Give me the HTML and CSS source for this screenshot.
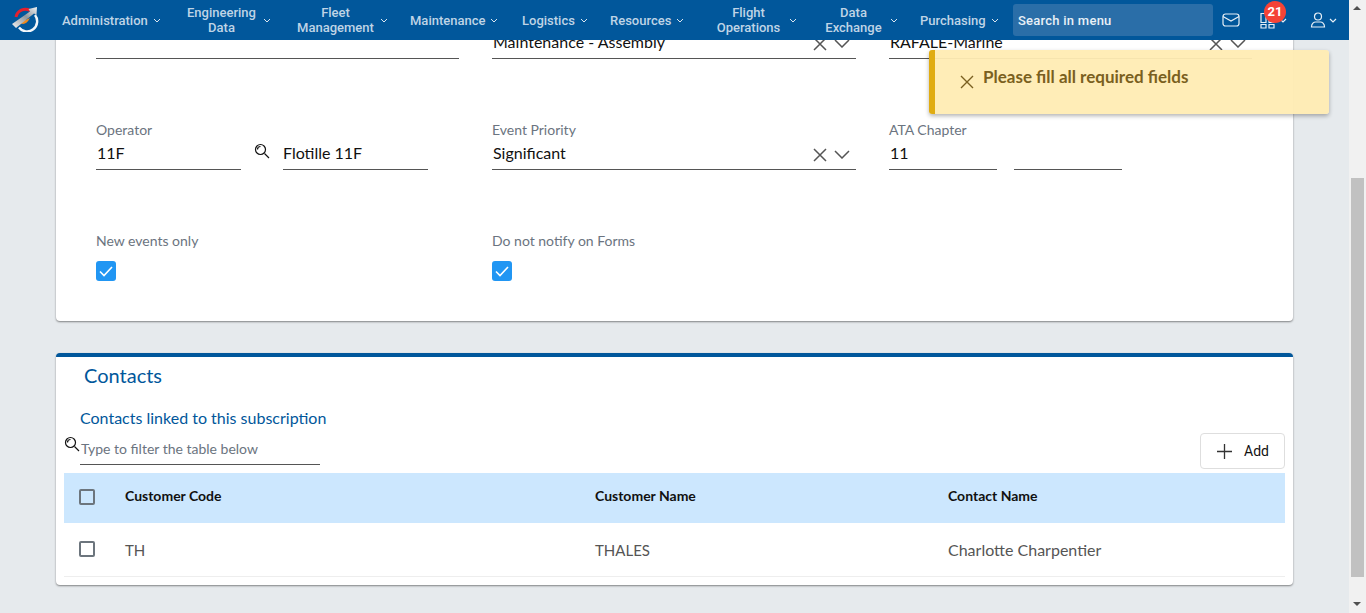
FILE: index.html
```html
<!DOCTYPE html>
<html>

<head>
  <meta charset="utf-8">
  <title>Subscription</title>
  <link rel="stylesheet" href="styles.css">
</head>

<body>
  <div class="app">
    <header class="topbar">
      <a class="logo">
        <svg width="28" height="28" viewBox="0 0 28 28">
          <defs>
            <linearGradient id="blade" x1="0" y1="1" x2="1" y2="0">
              <stop offset="0" stop-color="#f4f4f4"/>
              <stop offset=".55" stop-color="#8f959b"/>
              <stop offset="1" stop-color="#f2f4f6"/>
            </linearGradient>
          </defs>
          <path d="M8 23.500A10 10 0 0 0 24 11" fill="none" stroke="#f2f6fa" stroke-width="2.400"/>
          <path d="M5 13A9.500 9.500 0 0 1 19 6.500" fill="none" stroke="#e5202e" stroke-width="3"/>
          <path d="M10 19.500Q15 21.500 19 14L12 17Z" fill="#f08a1c"/>
          <path d="M1 20L19 7.500 17.500 5 26 3 25.500 11 23 9.500 5 24Z" fill="url(#blade)"/>
        </svg>
      </a>
      <nav class="menu">
        <a class="menu-item w-admin"><span>Administration</span><svg class="chev" viewBox="0 0 8 5"><path d="M1 1l3 3 3-3"/></svg></a>
        <a class="menu-item w-eng"><span>Engineering<br>Data</span><svg class="chev" viewBox="0 0 8 5"><path d="M1 1l3 3 3-3"/></svg></a>
        <a class="menu-item w-fleet"><span>Fleet<br>Management</span><svg class="chev" viewBox="0 0 8 5"><path d="M1 1l3 3 3-3"/></svg></a>
        <a class="menu-item w-maint"><span>Maintenance</span><svg class="chev" viewBox="0 0 8 5"><path d="M1 1l3 3 3-3"/></svg></a>
        <a class="menu-item w-log"><span>Logistics</span><svg class="chev" viewBox="0 0 8 5"><path d="M1 1l3 3 3-3"/></svg></a>
        <a class="menu-item w-res"><span>Resources</span><svg class="chev" viewBox="0 0 8 5"><path d="M1 1l3 3 3-3"/></svg></a>
        <a class="menu-item w-flight"><span>Flight<br>Operations</span><svg class="chev" viewBox="0 0 8 5"><path d="M1 1l3 3 3-3"/></svg></a>
        <a class="menu-item w-data"><span>Data<br>Exchange</span><svg class="chev" viewBox="0 0 8 5"><path d="M1 1l3 3 3-3"/></svg></a>
        <a class="menu-item w-purch"><span>Purchasing</span><svg class="chev" viewBox="0 0 8 5"><path d="M1 1l3 3 3-3"/></svg></a>
      </nav>
      <div class="menu-search">Search in menu</div>
      <div class="top-icons">
        <svg class="icon-mail" width="18" height="14" viewBox="0 0 18 14"><rect x="1" y="1" width="16" height="12" rx="2.500"/><path d="M1 3.500l8 4.500 8-4.500"/></svg>
        <div class="apps">
          <svg width="16" height="17" viewBox="0 0 16 17"><path d="M1 1.500h5v9H1zM1 12.500h5V16H1zM9 12.500h5V16H9zM9 6h5v4.500H9z"/></svg>
          <svg class="chev apps-chev" viewBox="0 0 8 5"><path d="M1 1l3 3 3-3"/></svg>
          <span class="badge">21</span>
        </div>
        <div class="user">
          <svg width="16" height="16" viewBox="0 0 16 16"><circle cx="8" cy="4.500" r="3.500"/><path d="M1.500 15c0-3.500 2.500-5 4-5h5c1.500 0 4 1.500 4 5z"/></svg>
          <svg class="chev" viewBox="0 0 8 5"><path d="M1 1l3 3 3-3"/></svg>
        </div>
      </div>
    </header>

    <main class="content">
      <section class="card card-form">
        <div class="form-row row-top">
          <div class="field col-1"><div class="line"></div></div>
          <div class="field col-2">
            <div class="line select"><span>Maintenance - Assembly</span>
              <svg class="clear" viewBox="0 0 14 14"><path d="M1 1l12 12M13 1L1 13"/></svg>
              <svg class="drop" viewBox="0 0 16 9"><path d="M1 1l7 7 7-7"/></svg>
            </div>
          </div>
          <div class="field col-3">
            <div class="line select"><span>RAFALE-Marine</span>
              <svg class="clear" viewBox="0 0 14 14"><path d="M1 1l12 12M13 1L1 13"/></svg>
              <svg class="drop" viewBox="0 0 16 9"><path d="M1 1l7 7 7-7"/></svg>
            </div>
          </div>
        </div>

        <div class="form-row row-second">
          <div class="field col-1 pair">
            <div class="half">
              <label>Operator</label>
              <div class="line"><span>11F</span></div>
            </div>
            <svg class="lens" viewBox="0 0 16 16"><circle cx="6.500" cy="6.500" r="5"/><path d="M10.500 10.500l4.500 4.500M3.500 6.500a3 3 0 0 1 3-3"/></svg>
            <div class="half">
              <div class="line"><span>Flotille 11F</span></div>
            </div>
          </div>
          <div class="field col-2">
            <label>Event Priority</label>
            <div class="line select"><span>Significant</span>
              <svg class="clear" viewBox="0 0 14 14"><path d="M1 1l12 12M13 1L1 13"/></svg>
              <svg class="drop" viewBox="0 0 16 9"><path d="M1 1l7 7 7-7"/></svg>
            </div>
          </div>
          <div class="field col-3 ata">
            <div class="ata-part">
              <label>ATA Chapter</label>
              <div class="line"><span>11</span></div>
            </div>
            <div class="ata-part">
              <div class="line"></div>
            </div>
          </div>
        </div>

        <div class="form-row row-checks">
          <div class="field col-1">
            <label>New events only</label>
            <div class="checkbox checked"><svg viewBox="0 0 20 20"><path d="M4 10.500l4 4 8-8.500"/></svg></div>
          </div>
          <div class="field col-2">
            <label>Do not notify on Forms</label>
            <div class="checkbox checked"><svg viewBox="0 0 20 20"><path d="M4 10.500l4 4 8-8.500"/></svg></div>
          </div>
        </div>
      </section>

      <section class="card card-contacts">
        <h2>Contacts</h2>
        <h3>Contacts linked to this subscription</h3>
        <div class="table-tools">
          <div class="filter">
            <svg class="lens" viewBox="0 0 16 16"><circle cx="6.500" cy="6.500" r="5"/><path d="M10.500 10.500l4.500 4.500M3.500 6.500a3 3 0 0 1 3-3"/></svg>
            <span>Type to filter the table below</span>
          </div>
          <button class="btn-add">
            <svg viewBox="0 0 16 16"><path d="M8 0v16M0 8h16"/></svg>
            Add
          </button>
        </div>
        <table class="contacts">
          <tr>
            <th class="c-check"><div class="checkbox"></div></th>
            <th class="c-code">Customer Code</th>
            <th class="c-name">Customer Name</th>
            <th>Contact Name</th>
          </tr>
          <tr>
            <td class="c-check"><div class="checkbox"></div></td>
            <td>TH</td>
            <td>THALES</td>
            <td class="c-contact">Charlotte Charpentier</td>
          </tr>
        </table>
      </section>
    </main>
  </div>

  <div class="scrollbar">
    <div class="arrow-up"></div>
    <div class="scroll-space"><div class="scroll-thumb"></div></div>
    <div class="arrow-down"></div>
  </div>

  <div class="toast">
    <svg viewBox="0 0 14 14"><path d="M1 1l12 12M13 1L1 13"/></svg>
    <span>Please fill all required fields</span>
  </div>
</body>
</html>
```

FILE: styles.css
```css
* {
  box-sizing: border-box;
}

html, body {
  height: 100%;
}

body {
  display: flex;
  margin: 0;
  overflow: hidden;
  background-color: #e6eaed;
  font-family: 'Lato', sans-serif;
  color: #111;
}

.app {
  flex: 1;
  min-width: 0;
  height: 613px;
  overflow: hidden;
}

/* top bar */
.topbar {
  position: relative;
  z-index: 2;
  display: flex;
  align-items: center;
  height: 40px;
  background-color: #01579b;
}

.logo {
  display: flex;
  flex: none;
  width: 62px;
  height: 28px;
  margin-top: -5px;
  padding-left: 11px;
}

.menu {
  display: flex;
  flex: none;
  align-items: center;
  font-family: 'Roboto', sans-serif;
  font-weight: 500;
  font-size: 13px;
  line-height: 15px;
  color: #bfd4e6;
}

.menu-item {
  display: flex;
  flex: none;
  align-items: center;
  text-align: center;
}

.chev {
  flex: none;
  width: 8px;
  height: 5px;
  fill: none;
  stroke: #dbe6f0;
  stroke-width: 1;
}

.menu-item .chev {
  margin-left: 5px;
}

.w-admin { width: 124px; }
.w-eng { width: 110px; }
.w-fleet { width: 114px; }
.w-maint { width: 112px; }
.w-log { width: 88px; }
.w-res { width: 106px; }
.w-flight { width: 108px; }
.w-data { width: 96px; }
.w-purch { width: 93px; }

.w-eng span { width: 71px; }
.w-eng .chev { margin-left: 6px; }
.w-fleet span { width: 79px; }
.w-flight span { width: 65px; }
.w-flight .chev { margin-left: 8px; }
.w-data span { width: 59px; }
.w-data .chev { margin-left: 7px; }

.menu-search {
  flex: none;
  width: 200px;
  height: 32px;
  padding-left: 5px;
  border-radius: 3px;
  background-color: #2a6ea8;
  font-family: 'Roboto', sans-serif;
  font-weight: 500;
  font-size: 13px;
  letter-spacing: .25px;
  line-height: 33px;
  color: #e8f0f7;
}

.top-icons {
  display: flex;
  align-items: center;
  margin-left: 9px;
}

.top-icons svg {
  fill: none;
  stroke: #e8f0f7;
  stroke-width: 1.2;
}

.apps {
  position: relative;
  display: flex;
  align-items: center;
  margin-left: 20px;
}

.apps .apps-chev {
  margin-left: 3px;
}

.badge {
  position: absolute;
  top: -11px;
  left: 4px;
  width: 22px;
  height: 22px;
  border-radius: 50%;
  background-color: #f44336;
  font-family: 'Roboto', sans-serif;
  font-weight: 700;
  font-size: 13px;
  line-height: 22px;
  text-align: center;
  color: #fff;
}

.user {
  display: flex;
  align-items: center;
  gap: 3px;
  margin-left: 23px;
}

/* page body */
.content {
  height: 573px;
  padding: 0 56px;
  overflow: hidden;
}

.card {
  border-radius: 4px;
  background-color: #fff;
  box-shadow: 0 1px 2px rgba(0, 0, 0, .45);
}

.card-form {
  height: 321px;
  margin-top: -40px;
  padding: 0 40px;
}

.form-row {
  display: flex;
}

.row-top {
  padding-top: 28px;
}

.row-second,
.row-checks {
  padding-top: 62px;
}

.col-1 {
  width: 363px;
  margin-right: 33px;
}

.col-2 {
  width: 364px;
  margin-right: 33px;
}

.col-3 {
  width: 363px;
}

label {
  display: block;
  height: 18px;
  font-size: 14px;
  line-height: 18px;
  color: #6b7480;
}

.line {
  display: flex;
  align-items: center;
  height: 31px;
  padding: 0 0 3px 1px;
  border-bottom: 1px solid #555;
  font-size: 16px;
  color: #111;
}

.select span {
  flex: 1;
}

.clear {
  width: 14px;
  height: 14px;
  margin: 4px 7px 0 0;
  fill: none;
  stroke: #555;
  stroke-width: 1.5;
}

.drop {
  width: 16px;
  height: 9px;
  margin: 4px 6px 0 0;
  fill: none;
  stroke: #555;
  stroke-width: 1.5;
}

.pair {
  display: flex;
  align-items: flex-end;
}

.half {
  width: 145px;
}

.pair .half:last-child .line {
  padding-left: 0;
}

.lens {
  width: 16px;
  height: 16px;
  fill: none;
  stroke: #111;
  stroke-width: 1.2;
}

.pair .lens {
  margin: 0 13px 11px;
}

.ata {
  display: flex;
  align-items: flex-end;
  gap: 17px;
}

.ata-part {
  width: 108px;
}

.checkbox {
  width: 16px;
  height: 16px;
  border: 2px solid #6c757d;
  border-radius: 2px;
}

.checkbox.checked {
  width: 20px;
  height: 20px;
  margin-top: 11px;
  border: none;
  border-radius: 3px;
  background-color: #2196f3;
}

.checkbox svg {
  display: block;
  fill: none;
  stroke: #fff;
  stroke-width: 1.6;
}

/* contacts */
.card-contacts {
  height: 232px;
  margin-top: 32px;
  padding: 0 8px;
  border-top: 4px solid #01579b;
}

.card-contacts h2 {
  margin: 0;
  padding: 6px 0 0 20px;
  font-size: 20px;
  font-weight: 400;
  line-height: 24px;
  color: #01579b;
}

.card-contacts h3 {
  margin: 0;
  padding: 21px 0 0 16px;
  font-size: 16px;
  font-weight: 400;
  line-height: 20px;
  color: #01579b;
}

.table-tools {
  display: flex;
  justify-content: space-between;
  align-items: flex-start;
  height: 36px;
}

.filter {
  position: relative;
  width: 240px;
  height: 28px;
  margin: 9px 0 0 16px;
  border-bottom: 1px solid #555;
  font-size: 14px;
  line-height: 24px;
  color: #6b7480;
}

.filter span {
  padding-left: 1px;
}

.filter .lens {
  position: absolute;
  top: -1px;
  left: -16px;
}

.btn-add {
  display: flex;
  align-items: center;
  gap: 12px;
  width: 85px;
  height: 36px;
  margin-top: 5px;
  padding: 0 0 0 16px;
  border: 1px solid #dedede;
  border-radius: 4px;
  background-color: #fff;
  font-family: 'Roboto', sans-serif;
  font-size: 14px;
  color: #111;
}

.btn-add svg {
  width: 15px;
  height: 15px;
  fill: none;
  stroke: #333;
  stroke-width: 1.4;
}

.contacts {
  width: 100%;
  margin-top: 9px;
  border-collapse: collapse;
  table-layout: fixed;
}

.contacts th {
  height: 50px;
  padding: 0 0 5px;
  background-color: #cce7fe;
  font-size: 14px;
  font-weight: 700;
  text-align: left;
  color: #111;
}

.contacts td {
  height: 53px;
  padding: 1px 0 0;
  border-bottom: 1px solid #eee;
  font-size: 15px;
  color: #555;
}

.contacts td.c-contact {
  font-size: 16px;
}

.contacts .c-check {
  width: 61px;
  padding: 0 0 2px 15px;
}

.contacts td.c-check {
  padding: 0 0 0 15px;
}

.c-code {
  width: 470px;
}

.c-name {
  width: 353px;
}

/* scrollbar */
.scrollbar {
  display: flex;
  flex: none;
  flex-direction: column;
  width: 17px;
  height: 613px;
  background-color: #f1f1f1;
}

.scroll-space {
  flex: 1;
  padding: 161px 2px 0;
}

.scroll-thumb {
  height: 399px;
  background-color: #c1c1c1;
}

.arrow-up,
.arrow-down {
  position: relative;
  height: 17px;
}

.arrow-up::after {
  content: "";
  position: absolute;
  left: 4px;
  top: 6px;
  border-left: 4px solid transparent;
  border-right: 4px solid transparent;
  border-bottom: 4px solid #505050;
}

.arrow-down::after {
  content: "";
  position: absolute;
  left: 4px;
  top: 6px;
  border-left: 4px solid transparent;
  border-right: 4px solid transparent;
  border-top: 4px solid #505050;
}

/* toast */
.toast {
  position: absolute;
  z-index: 3;
  top: 50px;
  left: 929px;
  display: flex;
  align-items: flex-start;
  width: 400px;
  height: 64px;
  padding: 17px 0 0 25px;
  border-left: 6px solid #e0ac12;
  border-radius: 3px;
  background-color: rgba(255, 236, 179, .95);
  box-shadow: 0 2px 4px rgba(0, 0, 0, .3);
  font-size: 17px;
  font-weight: 700;
  line-height: 20px;
  color: #7a6020;
}

.toast svg {
  flex: none;
  width: 14px;
  height: 14px;
  margin: 8px 9px 0 0;
  fill: none;
  stroke: #7a6020;
  stroke-width: 1.4;
}
```
